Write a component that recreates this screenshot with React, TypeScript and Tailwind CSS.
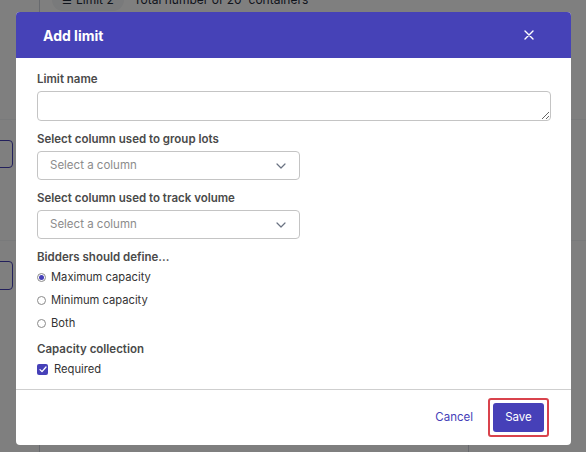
import { useState } from "react";

function Chevron() {
  return (
    <svg width="10" height="6" viewBox="0 0 10 6" fill="none" className="text-gray-500">
      <path d="M1 1l4 4 4-4" stroke="currentColor" strokeWidth="1.2" strokeLinecap="round" strokeLinejoin="round" />
    </svg>
  );
}

function SelectBox() {
  return (
    <div className="w-[263px] h-[29px] border border-[#c4c4c4] rounded-[4px] flex items-center justify-between pl-[12px] pr-[13px] text-[11.5px] text-[#8c8c8c]">
      <span>Select a column</span>
      <Chevron />
    </div>
  );
}

function Radio({ label, checked }: { label: string; checked?: boolean }) {
  return (
    <div className="flex items-center h-[16px]">
      <span className="w-[9px] h-[9px] rounded-full border border-[#8a8a8a] flex items-center justify-center mr-[5px]">
        {checked && <span className="w-[5px] h-[5px] rounded-full bg-[#4640b8]" />}
      </span>
      <span className="text-[11.2px] text-[#333]">{label}</span>
    </div>
  );
}

const label = "text-[11.5px] font-semibold text-[#4a4a4a] leading-[16px]";

export default function App() {
  const [name, setName] = useState("");

  return (
    <div className="relative w-[586px] h-[452px] overflow-hidden bg-white" style={{ fontFamily: "Inter, 'Noto Sans', sans-serif" }}>
      {/* page behind the dialog */}
      <div className="flex h-full">
        <div className="w-[40px] border-r border-gray-300 flex flex-col">
          <div className="h-[120px] border-b border-gray-100" />
          <div className="h-[121px] border-b border-gray-100 pt-[20px]">
            <div className="ml-[-20px] w-[33px] h-[28px] border border-[#4640b8] rounded-[4px]" />
          </div>
          <div className="pt-[20px]">
            <div className="ml-[-20px] w-[33px] h-[29px] border border-[#4640b8] rounded-[4px]" />
          </div>
        </div>
        <div className="flex-1 flex flex-col">
          <div className="h-[120px] border-b border-gray-100">
            <div className="flex items-center gap-[10px] mt-[-11px] ml-[12px]">
              <span className="flex items-center gap-1 rounded-full bg-gray-100 px-[10px] h-[22px] text-[12px] text-gray-800">
                <span className="text-[11px]">☰</span> Limit 2
              </span>
              <span className="text-[12px] text-gray-800">Total number of 20' containers</span>
            </div>
          </div>
          <div className="h-[121px] border-b border-gray-100" />
          <div className="flex-1 flex">
            <div className="w-[429px] border-r border-gray-300" />
          </div>
        </div>
      </div>

      {/* overlay */}
      <div className="absolute inset-0 bg-black/50 pt-[12px] pl-[16px]">
        <div className="w-[555px] h-[433px] bg-white rounded-[4px] overflow-hidden flex flex-col">
          <div className="h-[46px] bg-[#4642b7] flex items-center justify-between pl-[27px] pr-[37px] shrink-0">
            <span className="text-white font-bold text-[14px]">Add limit</span>
            <svg width="10" height="10" viewBox="0 0 10 10" className="text-white">
              <path d="M1 1l8 8M9 1l-8 8" stroke="currentColor" strokeWidth="1.4" strokeLinecap="round" />
            </svg>
          </div>

          <div className="flex-1 pl-[21px] pr-[20px] pt-[13px]">
            <div className={label}>Limit name</div>
            <textarea
              value={name}
              onChange={(e) => setName(e.target.value)}
              className="block w-full h-[30px] mt-[4px] border border-[#c4c4c4] rounded-[4px] text-[12px] px-2 outline-none"
            />

            <div className={`${label} mt-[10px] mb-[4px]`}>Select column used to group lots</div>
            <SelectBox />

            <div className={`${label} mt-[10px] mb-[4px]`}>Select column used to track volume</div>
            <SelectBox />

            <div className={`${label} mt-[10px] mb-[4px]`}>Bidders should define...</div>
            <div className="flex flex-col gap-[7px]">
              <Radio label="Maximum capacity" checked />
              <Radio label="Minimum capacity" />
              <Radio label="Both" />
            </div>

            <div className={`${label} mt-[10px] mb-[4px]`}>Capacity collection</div>
            <div className="flex items-center h-[16px]">
              <span className="w-[11px] h-[11px] rounded-[2px] bg-[#4640b8] flex items-center justify-center mr-[6px]">
                <svg width="8" height="7" viewBox="0 0 8 7" fill="none">
                  <path d="M1 3.6l2 2L7 1" stroke="white" strokeWidth="1.3" strokeLinecap="round" strokeLinejoin="round" />
                </svg>
              </span>
              <span className="text-[11.2px] text-[#333]">Required</span>
            </div>
          </div>

          <div className="h-[56px] border-t border-[#cfcfcf] flex items-center justify-end pr-[22px] shrink-0">
            <button className="text-[11.5px] text-[#4640b8] mr-[15px]">Cancel</button>
            <div className="border-2 border-[#d9434c] rounded-[3px] p-[3px]">
              <button className="w-[51px] h-[29px] bg-[#4640b8] rounded-[3px] text-white text-[11.5px]">Save</button>
            </div>
          </div>
        </div>
      </div>
    </div>
  );
}
